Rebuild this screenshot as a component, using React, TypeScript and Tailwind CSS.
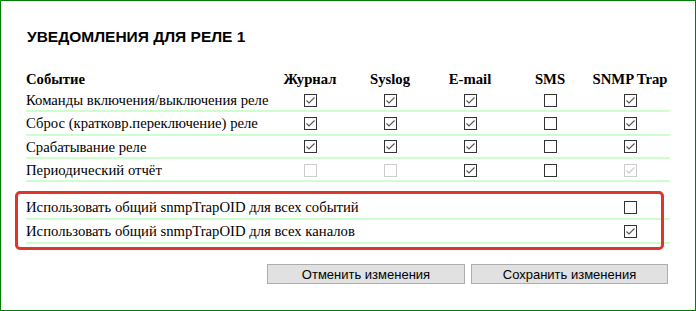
const COLS = ["Журнал", "Syslog", "E-mail", "SMS", "SNMP Trap"];

type Cell = { checked: boolean; disabled?: boolean };

const ROWS: { label: string; cells: Cell[] }[] = [
  {
    label: "Команды включения/выключения реле",
    cells: [{ checked: true }, { checked: true }, { checked: true }, { checked: false }, { checked: true }],
  },
  {
    label: "Сброс (кратковр.переключение) реле",
    cells: [{ checked: true }, { checked: true }, { checked: true }, { checked: false }, { checked: true }],
  },
  {
    label: "Срабатывание реле",
    cells: [{ checked: true }, { checked: true }, { checked: true }, { checked: false }, { checked: true }],
  },
  {
    label: "Периодический отчёт",
    cells: [
      { checked: false, disabled: true },
      { checked: false, disabled: true },
      { checked: true },
      { checked: false },
      { checked: true, disabled: true },
    ],
  },
];

function Checkbox({ checked, disabled }: Cell) {
  return (
    <span
      className={`inline-flex h-[13px] w-[13px] items-center justify-center border bg-white ${
        disabled ? "border-[#cccccc]" : "border-[#333333]"
      }`}
    >
      {checked && (
        <svg width="11" height="11" viewBox="0 0 11 11" aria-hidden="true">
          <polyline
            points="1.5,5.5 4,8 9.5,2.5"
            fill="none"
            stroke={disabled ? "#cccccc" : "#555555"}
            strokeWidth="1.1"
          />
        </svg>
      )}
    </span>
  );
}

const serif = "font-['Liberation_Serif','Times_New_Roman',serif]";

export default function App() {
  return (
    <div className="h-[311px] w-[696px] border border-[#008000] bg-white text-black">
      <h2 className="pl-[26px] pt-[27px] font-['Liberation_Sans',Arial,sans-serif] text-[15.5px] font-bold leading-[18px]">
        УВЕДОМЛЕНИЯ ДЛЯ РЕЛЕ 1
      </h2>

      <div className={`ml-[25px] mt-[22px] w-[644px] text-[14.7px] ${serif}`}>
        <div className="grid h-[21px] grid-cols-[244px_repeat(5,80px)] items-center whitespace-nowrap font-bold">
          <span>Событие</span>
          {COLS.map((c) => (
            <span key={c} className="text-center">
              {c}
            </span>
          ))}
        </div>

        {ROWS.map((row) => (
          <div
            key={row.label}
            className="grid h-[23.33px] grid-cols-[244px_repeat(5,80px)] items-center border-b-2 border-[#ccffcc]"
          >
            <span className="whitespace-nowrap">{row.label}</span>
            {row.cells.map((cell, i) => (
              <span key={i} className="flex justify-center">
                <Checkbox {...cell} />
              </span>
            ))}
          </div>
        ))}

        <div className="relative mt-[14px]">
          {[
            { label: "Использовать общий snmpTrapOID для всех событий", checked: false },
            { label: "Использовать общий snmpTrapOID для всех каналов", checked: true },
          ].map((r) => (
            <div key={r.label} className="flex h-[24px] items-center border-b-2 border-[#ccffcc]">
              <span className="flex-1 whitespace-nowrap">{r.label}</span>
              <span className="flex w-[80px] justify-center">
                <Checkbox checked={r.checked} />
              </span>
            </div>
          ))}
          <div className="pointer-events-none absolute -bottom-[6px] -left-[11px] -top-[5px] right-[6px] rounded-[5px] border-[3px] border-[#e0352b]" />
        </div>
      </div>

      <div className="mt-[20px] flex justify-end gap-[6px] pr-[27px] font-['Liberation_Sans',Arial,sans-serif] text-[13px]">
        <button className="h-[20px] w-[198px] border border-[#adadad] bg-[#e1e1e1] leading-none">
          Отменить изменения
        </button>
        <button className="h-[20px] w-[197px] border border-[#adadad] bg-[#e1e1e1] leading-none">
          Сохранить изменения
        </button>
      </div>
    </div>
  );
}
